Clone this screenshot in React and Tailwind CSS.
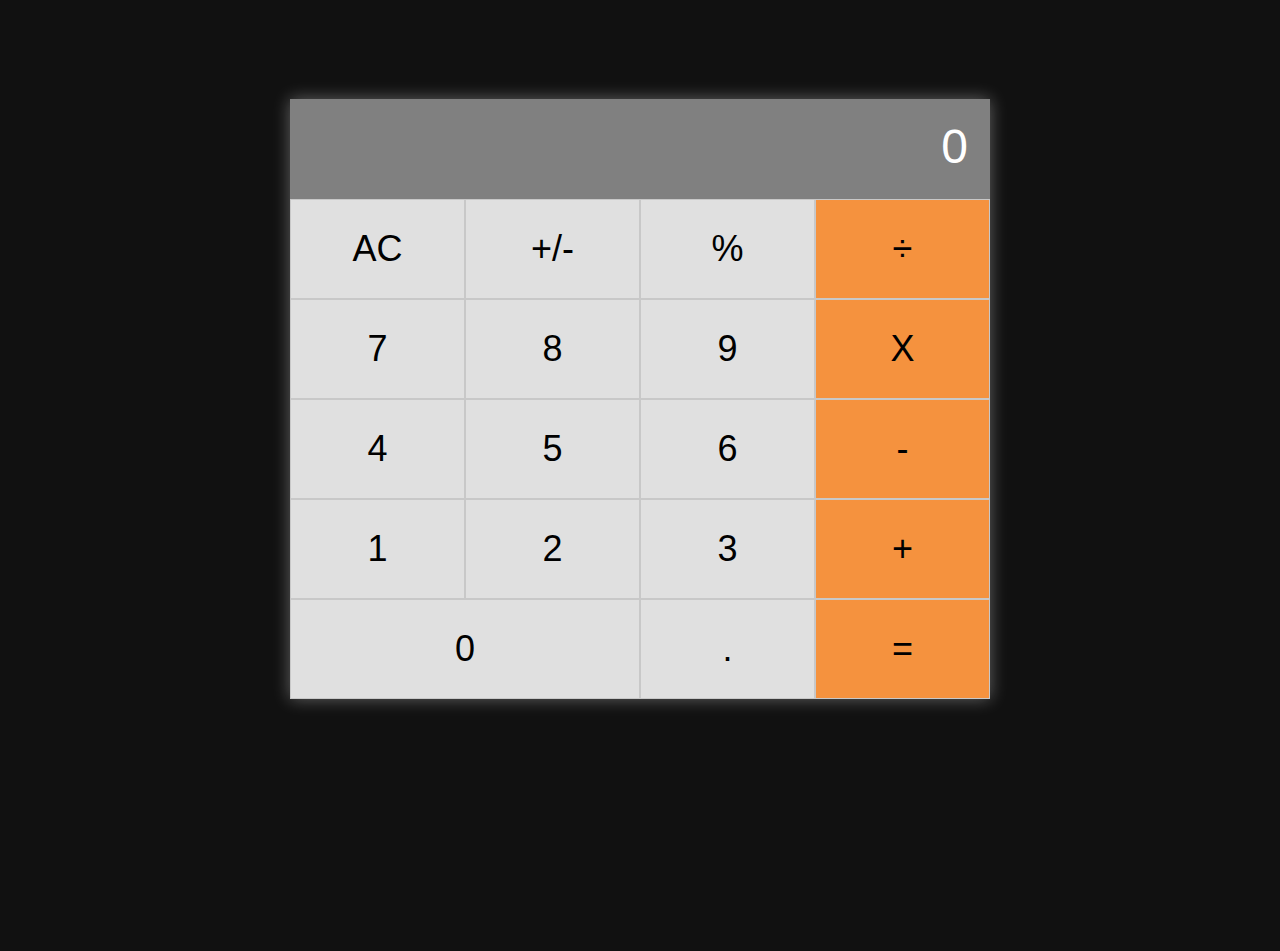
const keys = [
  { label: "AC" },
  { label: "+/-" },
  { label: "%" },
  { label: "÷", op: true },
  { label: "7" },
  { label: "8" },
  { label: "9" },
  { label: "X", op: true },
  { label: "4" },
  { label: "5" },
  { label: "6" },
  { label: "-", op: true },
  { label: "1" },
  { label: "2" },
  { label: "3" },
  { label: "+", op: true },
  { label: "0", wide: true },
  { label: "." },
  { label: "=", op: true },
];

export default function App() {
  return (
    <div className="min-h-screen bg-[#111111] pt-[99px] font-['Liberation_Sans',Arial,sans-serif]">
      <div className="mx-auto w-[700px] shadow-[0_0_16px_rgba(255,255,255,0.35)]">
        {/* Display */}
        <div className="flex h-[100px] items-center justify-end bg-[#808080] pr-[22px] pb-1 text-[48px] text-white">
          0
        </div>

        {/* Keypad */}
        <div className="grid grid-cols-4">
          {keys.map((k) => (
            <button
              key={k.label}
              className={
                "flex h-[100px] items-center justify-center border border-[#c8c8c8] text-[36px] text-black " +
                (k.op ? "bg-[#f5923e] " : "bg-[#e0e0e0] ") +
                (k.wide ? "col-span-2" : "")
              }
            >
              {k.label}
            </button>
          ))}
        </div>
      </div>
    </div>
  );
}
